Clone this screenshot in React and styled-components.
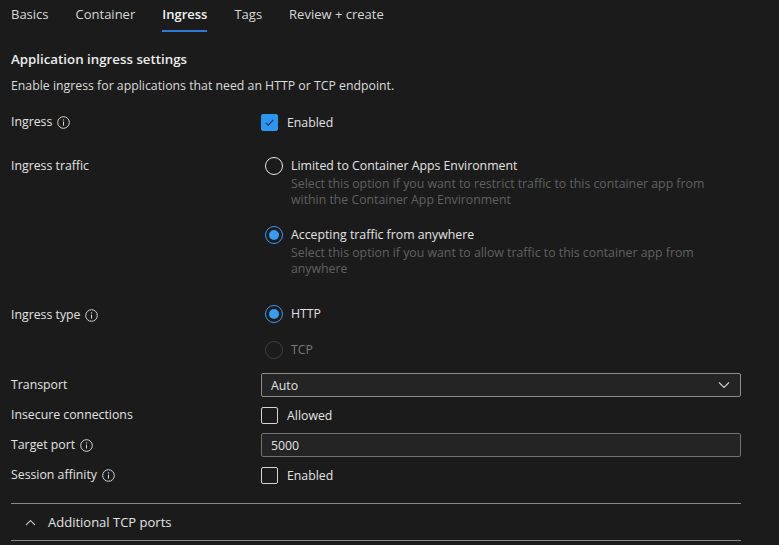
import React from 'react';
import styled, { createGlobalStyle } from 'styled-components';

const GlobalStyle = createGlobalStyle`
    html, body {
        margin: 0;
        padding: 0;
        background: #1b1b1b;
    }
    body {
        font-family: "Open Sans", "Noto Sans", sans-serif;
        font-size: 12.3px;
        color: #e3e3e3;
    }
    * {
        box-sizing: border-box;
    }
`;

const Page = styled.div`
    width: 779px;
    height: 545px;
    overflow: hidden;
    background: #1b1b1b;
`;

const TabBar = styled.nav`
    height: 32px;
    display: flex;
    gap: 27px;
    padding-left: 11px;
`;

const Tab = styled.div`
    height: 32px;
    padding-top: 5px;
    line-height: 18px;
    font-size: 13px;
    color: ${p => p.$active ? '#f2f2f2' : '#d8d8d8'};
    font-weight: ${p => p.$active ? 600 : 400};
    border-bottom: 2px solid ${p => p.$active ? '#2a7bd4' : 'transparent'};
`;

const Content = styled.div`
    width: 741px;
    padding-left: 11px;
`;

const Heading = styled.h2`
    margin: 17px 0 0;
    font-size: 13.3px;
    line-height: 20px;
    font-weight: 600;
    color: #ececec;
`;

const Intro = styled.p`
    margin: 8px 0 0;
    font-size: 12.3px;
    line-height: 18px;
    color: #dcdcdc;
`;

const Row = styled.div`
    display: grid;
    grid-template-columns: 250px 1fr;
    align-items: ${p => p.$top ? 'start' : 'center'};
    margin-top: ${p => p.$gap}px;
`;

const Label = styled.div`
    display: flex;
    align-items: center;
    gap: 5px;
    padding-top: ${p => p.$drop || 0}px;
    line-height: 18px;
    font-size: 12.3px;
    color: #e3e3e3;
`;

const InfoIcon = () => (
    <svg width="13" height="13" viewBox="0 0 13 13" fill="none">
        <circle cx="6.5" cy="6.5" r="5.8" stroke="#d6d6d6" strokeWidth="1" />
        <line x1="6.5" y1="5.6" x2="6.5" y2="9.6" stroke="#d6d6d6" strokeWidth="1" />
        <circle cx="6.5" cy="3.9" r="0.7" fill="#d6d6d6" />
    </svg>
);

const CheckRow = styled.label`
    display: flex;
    align-items: center;
    gap: 9px;
    height: 18px;
    font-size: 12.3px;
    color: #e3e3e3;
`;

const Box = styled.span`
    width: 17px;
    height: 17px;
    border-radius: 2px;
    display: flex;
    align-items: center;
    justify-content: center;
    background: ${p => p.$checked ? '#2b95f0' : 'transparent'};
    border: 1px solid ${p => p.$checked ? '#2b95f0' : '#d4d4d4'};
`;

const Checkbox = ({ checked, label }) => (
    <CheckRow>
        <Box $checked={checked}>
            {checked &&
                <svg width="11" height="11" viewBox="0 0 11 11" fill="none">
                    <path d="M1.8 5.8 L4.3 8.2 L9.3 2.8" stroke="#10324f" strokeWidth="1.1" />
                </svg>}
        </Box>
        {label}
    </CheckRow>
);

const Options = styled.div`
    display: flex;
    flex-direction: column;
    gap: ${p => p.$gap}px;
`;

const Option = styled.div`
    display: grid;
    grid-template-columns: 18px 1fr;
    column-gap: 8px;
    padding-left: 4px;
`;

const Circle = styled.span`
    width: 18px;
    height: 18px;
    border-radius: 50%;
    display: flex;
    align-items: center;
    justify-content: center;
    border: 1.5px solid ${p => p.$checked ? '#3a9bf2' : p.$disabled ? '#3f3f3f' : '#e8e8e8'};
`;

const Dot = styled.span`
    width: 10px;
    height: 10px;
    border-radius: 50%;
    background: #3a9bf2;
`;

const OptionTitle = styled.div`
    font-size: 12.3px;
    line-height: 18px;
    color: ${p => p.$disabled ? '#7a7a7a' : '#e3e3e3'};
`;

const OptionHint = styled.div`
    grid-column: 2;
    padding-top: 1px;
    font-size: 12.3px;
    line-height: 16px;
    color: #616161;
    max-width: 420px;
`;

const Radio = ({ checked, disabled, title, hint }) => (
    <Option>
        <Circle $checked={checked} $disabled={disabled}>
            {checked && <Dot />}
        </Circle>
        <OptionTitle $disabled={disabled}>{title}</OptionTitle>
        {hint && <OptionHint>{hint}</OptionHint>}
    </Option>
);

const Field = styled.div`
    height: 24px;
    display: flex;
    align-items: center;
    justify-content: space-between;
    padding: 0 10px 0 9px;
    border: 1px solid ${p => p.$select ? '#8c8c8c' : '#727272'};
    border-radius: 2px;
    background: #242424;
    font-size: 12.3px;
    color: #e3e3e3;
`;

const Divider = styled.div`
    height: 1px;
    background: #8a8a8a;
    margin-top: ${p => p.$gap}px;
`;

const Section = styled.div`
    height: 36px;
    display: flex;
    align-items: center;
    gap: 12px;
    padding-left: 14px;
    font-size: 13px;
    color: #e3e3e3;
`;

const App = () => {
    const tabs = ['Basics', 'Container', 'Ingress', 'Tags', 'Review + create'];

    return (
        <Page>
            <GlobalStyle />
            <TabBar>
                {tabs.map(t => <Tab key={t} $active={t === 'Ingress'}>{t}</Tab>)}
            </TabBar>
            <Content>
                <Heading>Application ingress settings</Heading>
                <Intro>Enable ingress for applications that need an HTTP or TCP endpoint.</Intro>

                <Row $gap={18}>
                    <Label>Ingress <InfoIcon /></Label>
                    <Checkbox checked label="Enabled" />
                </Row>

                <Row $gap={26} $top>
                    <Label>Ingress traffic</Label>
                    <Options $gap={18}>
                        <Radio
                            title="Limited to Container Apps Environment"
                            hint="Select this option if you want to restrict traffic to this container app from within the Container App Environment" />
                        <Radio
                            checked
                            title="Accepting traffic from anywhere"
                            hint="Select this option if you want to allow traffic to this container app from anywhere" />
                    </Options>
                </Row>

                <Row $gap={28} $top>
                    <Label $drop={1}>Ingress type <InfoIcon /></Label>
                    <Options $gap={18}>
                        <Radio checked title="HTTP" />
                        <Radio disabled title="TCP" />
                    </Options>
                </Row>

                <Row $gap={14}>
                    <Label>Transport</Label>
                    <Field $select>
                        Auto
                        <svg width="12" height="8" viewBox="0 0 12 8" fill="none">
                            <path d="M1 1.5 L6 6.5 L11 1.5" stroke="#d0d0d0" strokeWidth="1.1" />
                        </svg>
                    </Field>
                </Row>

                <Row $gap={9}>
                    <Label>Insecure connections</Label>
                    <Checkbox label="Allowed" />
                </Row>

                <Row $gap={9}>
                    <Label>Target port <InfoIcon /></Label>
                    <Field>5000</Field>
                </Row>

                <Row $gap={9}>
                    <Label>Session affinity <InfoIcon /></Label>
                    <Checkbox label="Enabled" />
                </Row>

                <Divider $gap={19} />
                <Section>
                    <svg width="11" height="7" viewBox="0 0 11 7" fill="none">
                        <path d="M1 6 L5.5 1.5 L10 6" stroke="#bdbdbd" strokeWidth="1.1" />
                    </svg>
                    Additional TCP ports
                </Section>
                <Divider $gap={0} />
            </Content>
        </Page>
    );
};

export default App;
